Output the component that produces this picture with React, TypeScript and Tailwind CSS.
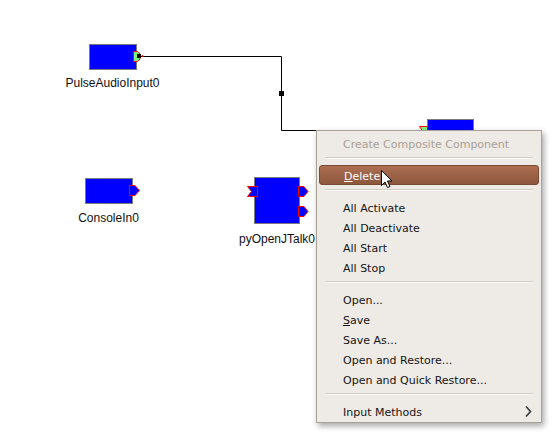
import React from "react";

const menuFont = { fontFamily: '"DejaVu Sans", "Liberation Sans", sans-serif' };

function Row({ children, disabled, active, right }: { children: React.ReactNode; disabled?: boolean; active?: boolean; right?: React.ReactNode }) {
  const base = "mx-[2px] h-[20px] flex items-center justify-between pl-[24px] pr-[7px] text-[11px] leading-[20px]";
  if (active) {
    return (
      <div className={`${base} rounded-[3px] border border-[#7b4a34] bg-linear-to-b from-[#ad6f52] to-[#8d573d] text-white pl-[23px]`}>
        <span className="relative top-[2px]">{children}</span>
        {right}
      </div>
    );
  }
  return (
    <div className={`${base} ${disabled ? "text-[#a9a196]" : "text-[#151515]"}`}>
      <span className="relative top-[2px]">{children}</span>
      {right}
    </div>
  );
}

function Sep() {
  return (
    <div className="h-[12px] pt-[4px]">
      <div className="mx-[8px] h-px bg-[#d3ccc2]" />
      <div className="mx-[8px] h-px bg-[#fbfaf8]" />
    </div>
  );
}

function Label({ text, cx, top }: { text: string; cx: number; top: number }) {
  return (
    <div
      className="absolute w-[140px] text-center text-[12px] leading-[14px] text-[#111]"
      style={{ left: cx - 70, top, fontFamily: '"Liberation Sans", Arial, sans-serif' }}
    >
      {text}
    </div>
  );
}

export default function App() {
  return (
    <div className="relative w-[560px] h-[440px] bg-white overflow-hidden">
      <svg className="absolute left-0 top-0" width="560" height="440" viewBox="0 0 560 440">
        {/* connection */}
        <path d="M141 56.5 H281.5 V130.5 H420" fill="none" stroke="#000" strokeWidth="1" />
        <rect x="279" y="91" width="5" height="5" fill="#000" />

        {/* PulseAudioInput0 */}
        <rect x="89.5" y="44.5" width="47" height="25" fill="#0000ff" stroke="#7a7a7a" />
        <path d="M133.5 51.5 H137.5 L140 54 V59 L137.5 61.5 H133.5 Z" fill="#7cf07c" stroke="#ff0000" />
        <rect x="137" y="54" width="4" height="4" fill="#000" />
        <rect x="142" y="55" width="1" height="2" fill="#ff0000" />

        {/* hidden component */}
        <rect x="427.5" y="119.5" width="46" height="30" fill="#0000ff" stroke="#7a7a7a" />
        <path d="M419.5 126.5 H427.5 V136.5 H419.5 L423 131.5 Z" fill="#7cf07c" stroke="#ff0000" />

        {/* ConsoleIn0 */}
        <rect x="85.5" y="178.5" width="47" height="25" fill="#0000ff" stroke="#7a7a7a" />
        <path d="M129.5 185.5 H135 L139.5 190.5 L135 195.5 H129.5 Z" fill="#0000ff" stroke="#ff0000" />

        {/* pyOpenJTalk0 */}
        <rect x="254.5" y="177.5" width="45" height="46" fill="#0000ff" stroke="#7a7a7a" />
        <path d="M247.5 186.5 H257.5 V196.5 H247.5 L251.5 191.5 Z" fill="#0000ff" stroke="#ff0000" />
        <path d="M298.5 186.5 H304 L308 191.5 L304 196.5 H298.5 Z" fill="#0000ff" stroke="#ff0000" />
        <path d="M298.5 206.5 H304 L308 211.5 L304 216.5 H298.5 Z" fill="#0000ff" stroke="#ff0000" />
      </svg>

      <Label text="PulseAudioInput0" cx={112.5} top={76} />
      <Label text="ConsoleIn0" cx={108.5} top={211} />
      <Label text="pyOpenJTalk0" cx={277} top={232} />

      {/* context menu */}
      <div
        className="absolute left-[316px] top-[130px] w-[226px] h-[293px] border border-[#a9a195] bg-[#eeeae5] pt-[2px] shadow-[2px_3px_6px_rgba(0,0,0,0.35)] flex flex-col"
        style={menuFont}
      >
        <Row disabled>Create Composite Component</Row>
        <Sep />
        <Row active>
          <span className="underline underline-offset-1">D</span>elete
        </Row>
        <Sep />
        <Row>All Activate</Row>
        <Row>All Deactivate</Row>
        <Row>All Start</Row>
        <Row>All Stop</Row>
        <Sep />
        <Row>Open...</Row>
        <Row>
          <span className="underline underline-offset-1">S</span>ave
        </Row>
        <Row>Save As...</Row>
        <Row>Open and Restore...</Row>
        <Row>Open and Quick Restore...</Row>
        <Sep />
        <Row
          right={
            <svg width="7" height="11" viewBox="0 0 7 11">
              <path d="M1 0.5 L5.5 5.5 L1 10.5" fill="none" stroke="#3a3a3a" strokeWidth="1.6" />
            </svg>
          }
        >
          Input Methods
        </Row>
      </div>

      {/* mouse cursor */}
      <svg className="absolute left-[380px] top-[169px]" width="14" height="21" viewBox="0 0 14 21">
        <path d="M1.5 1.5 L1.5 16.5 L5 13 L7.5 18.5 L10 17.5 L7.5 12 L12 12 Z" fill="#fff" stroke="#000" strokeWidth="1" strokeLinejoin="round" />
      </svg>
    </div>
  );
}
